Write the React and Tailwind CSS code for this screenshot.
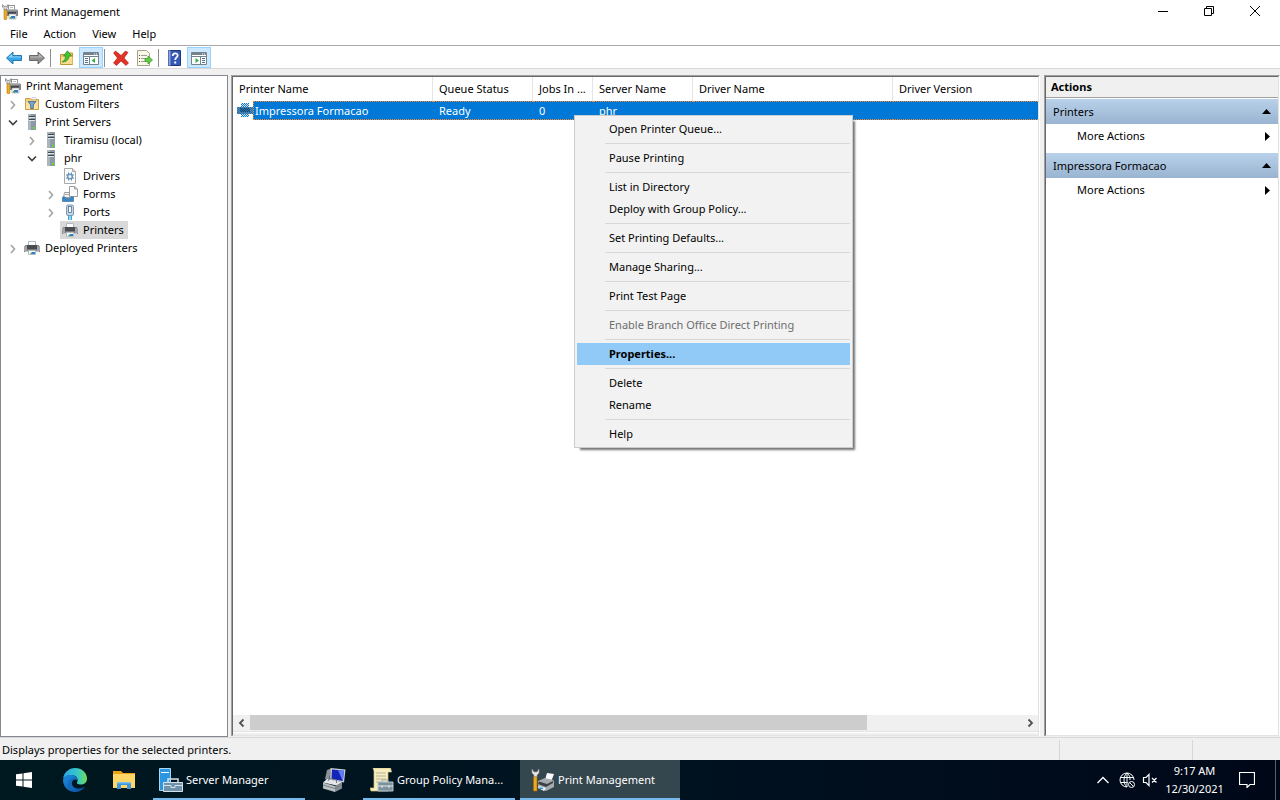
import React from "react";

function Icon({ size = 16, box = "0 0 16 16", children, className = "size-4" }) {
  return (
    <svg width={size} height={size} viewBox={box} className={`shrink-0 ${className}`} aria-hidden="true">
      {children}
    </svg>
  );
}

function PrintMgmtIcon() {
  return (
    <Icon>
      <rect x="6.5" y="1.5" width="6" height="5" fill="#fff" stroke="#8f959a" />
      <path d="M8 3.500h3" stroke="#b9bec2" />
      <path d="M5 5h10v1h1v6H5z" fill="#808285" />
      <path d="M5 5h10v1.500H5z" fill="#b5b7b9" />
      <path d="M6 8h8v3H6z" fill="#45474b" />
      <path d="M7 10h7v5H7z" fill="#f3f5f6" stroke="#9a9a9a" strokeWidth=".6" />
      <path d="M9 12h4v2.500H9z" fill="#2c7cc4" />
      <path d="M8 13h2v1.500H8z" fill="#46a24a" />
      <path d="M.6.6v2.600L2 4.600V6h2.600V4.600L6 3.200V.6L4.600 2.400H2z" fill="#d9d9d9" stroke="#7d7d7d" strokeWidth=".8" />
      <rect x="2" y="6" width="2.800" height="9.500" rx=".8" fill="#f2b01e" stroke="#a86f00" strokeWidth=".6" />
    </Icon>
  );
}

function FilterFolderIcon() {
  return (
    <Icon>
      <path d="M1.500 2.500h5l1 1h7v10h-13z" fill="#f3cf78" stroke="#c9a048" />
      <path d="M2 5.500h12v7.500H2z" fill="#fbe3a0" />
      <path d="M8 1.500h4v2H8z" fill="#fff" stroke="#b9b9b9" strokeWidth=".6" />
      <path d="M4 5.500h8L9.300 9v3.500H6.700V9z" fill="#7ba3cc" stroke="#42658c" strokeWidth=".8" />
    </Icon>
  );
}

function ServerIcon() {
  return (
    <Icon>
      <path d="M4 0h8v16H4z" fill="#8d9aa3" />
      <path d="M4 0h3v16H4z" fill="#aab6be" />
      <path d="M5 2h6v1H5zM5 5h6v1H5z" fill="#3d4850" />
      <path d="M5 3h6v1H5zM5 6h6v1H5z" fill="#dfe5e9" />
      <path d="M9 13h2v2H9z" fill="#5de01f" />
    </Icon>
  );
}

function DriverIcon() {
  return (
    <Icon>
      <path d="M2.500.5h8l3 3v12h-11z" fill="#fafafa" stroke="#a9a9a9" />
      <path d="M10.500.5v3h3" fill="#ddd" stroke="#a9a9a9" />
      <circle cx="8" cy="8.500" r="2.300" fill="none" stroke="#6b97bd" strokeWidth="1.500" />
      <path d="M6.500 4.500v2M9.500 4.500v2M6.500 10.500v2M9.500 10.500v2M4 7h2M4 10h2M10 7h2M10 10h2" stroke="#5d8db6" />
    </Icon>
  );
}

function FormsIcon() {
  return (
    <Icon>
      <path d="M2.500 6.500H8v5H1.500z" fill="#f4f4f4" stroke="#9d9d9d" />
      <path d="M3 8.500h5" stroke="#aaa" />
      <path d="M7.500.5h5l3 2.500v7.500h-8z" fill="#fafafa" stroke="#9d9d9d" />
      <path d="M12.500.5V3h3" fill="none" stroke="#9d9d9d" />
      <path d="M.5 11h2.500l1 1.500h4L9 11h2.500v4.500H.5z" fill="#3b87c4" stroke="#2b699e" strokeWidth=".6" />
    </Icon>
  );
}

function PortsIcon() {
  return (
    <Icon>
      <rect x="4.500" y="1" width="7" height="10.500" rx="1.500" fill="#c5d5e4" stroke="#7f9ab5" />
      <rect x="6.500" y="2.500" width="3" height="6" fill="#f4f8fb" stroke="#4f7396" strokeWidth=".8" />
      <path d="M6 11.500h1.500V16H6zM8.500 11.500H10V16H8.500z" fill="#39a9dc" />
    </Icon>
  );
}

function PrinterIcon() {
  return (
    <Icon>
      <path d="M4.500 1.500h7v4h-7z" fill="#fff" stroke="#aeb9c0" />
      <path d="M1 5h14v1h1v6H0V6h1z" fill="#808285" />
      <path d="M0 6h3v5H0zM13 6h3v5h-3z" fill="#a2a4a7" />
      <path d="M3 5h10v4H3z" fill="#494b50" />
      <path d="M3 9h10v1H3z" fill="#77797c" />
      <path d="M1 11h14v1H1z" fill="#c7c8ca" />
      <path d="M4.500 10.500h7v4h-7z" fill="#fff" stroke="#b1bcc3" />
      <path d="M8 12h3v2H8z" fill="#2c7fc9" />
      <path d="M6.500 12.500H8V14H6.500z" fill="#3fa05a" />
    </Icon>
  );
}

function SelectedPrinterIcon() {
  return (
    <Icon className="mt-px size-4">
      <defs>
        <pattern id="dither" width="2" height="2" patternUnits="userSpaceOnUse">
          <path d="M0 0h1v1H0zM1 1h1v1H1z" fill="#0078d7" />
        </pattern>
      </defs>
      <path d="M4 1h8v4H4zM4 11h8v4H4z" fill="#dfe4e8" />
      <path d="M0 5h16v7H0z" fill="#808285" />
      <path d="M3 6h10v4H3z" fill="#3c3e42" />
      <path d="M4 1h8v4h4v7h-4v3H4v-3H0V5h4z" fill="url(#dither)" shapeRendering="crispEdges" />
    </Icon>
  );
}

function Chevron({ open }) {
  return (
    <Icon>
      {open ? (
        <path d="M4 6.500 8 10.500 12 6.500" fill="none" stroke="#404040" strokeWidth="1.700" />
      ) : (
        <path d="M6 5 9.500 9 6 13" fill="none" stroke="#a6a6a6" strokeWidth="1.700" />
      )}
    </Icon>
  );
}

const tree = [
  { label: "Print Management", icon: PrintMgmtIcon, pad: "pl-[2px]" },
  { label: "Custom Filters", icon: FilterFolderIcon, pad: "pl-[4px]", open: false },
  { label: "Print Servers", icon: ServerIcon, pad: "pl-[4px]", open: true },
  { label: "Tiramisu (local)", icon: ServerIcon, pad: "pl-[23px]", open: false },
  { label: "phr", icon: ServerIcon, pad: "pl-[23px]", open: true },
  { label: "Drivers", icon: DriverIcon, pad: "pl-[59px]" },
  { label: "Forms", icon: FormsIcon, pad: "pl-[42px]", open: false },
  { label: "Ports", icon: PortsIcon, pad: "pl-[42px]", open: false },
  { label: "Printers", icon: PrinterIcon, pad: "pl-[59px]", selected: true },
  { label: "Deployed Printers", icon: PrinterIcon, pad: "pl-[4px]", open: false },
];

function Tree() {
  return (
    <nav aria-label="Console tree" className="w-[228px] shrink-0 border border-[#828790] bg-white py-px">
      <ul>
        {tree.map((n) => (
          <li key={n.label} className={`flex h-[18px] items-center ${n.pad}`}>
            {n.open !== undefined && (
              <button aria-label={`Toggle ${n.label}`} className="mr-px">
                <Chevron open={n.open} />
              </button>
            )}
            <button className={`flex h-[18px] items-center gap-[5px] pr-1 pl-[2px] ${n.selected ? "bg-[#d9d9d9]" : ""}`}>
              <n.icon />
              {n.label}
            </button>
          </li>
        ))}
      </ul>
    </nav>
  );
}

function Toolbar() {
  const btn = "flex h-[21px] w-6 items-center justify-center pt-px";
  const arrow = "flex h-[21px] w-[23px] items-center justify-center pt-px";
  const pressed = "flex h-[21px] w-6 items-center justify-center border border-[#99d1ff] bg-[#cce8ff] pt-px";
  return (
    <div role="toolbar" className="flex h-[23px] items-center border-b border-[#d7d7d7] bg-white pt-px pl-[2px]">
      <button aria-label="Back" className={arrow}>
        <Icon>
          <path d="M.5 8 7 2v3.500h8.500v5H7V14z" fill="#35a4e8" stroke="#1d6ca8" strokeWidth=".9" />
          <path d="M2 7.500 6.200 3.800v2.700h8.500v1z" fill="#8fd3f8" />
        </Icon>
      </button>
      <button aria-label="Forward" className={arrow}>
        <Icon>
          <path d="M15.500 8 9 2v3.500H.5v5H9V14z" fill="#8f8f8f" stroke="#5f5f5f" strokeWidth=".9" />
          <path d="M14 7.500 9.800 3.800v2.700H1.300v1z" fill="#b9b9b9" />
        </Icon>
      </button>
      <span className="mr-1 ml-[2px] h-[18px] w-px bg-[#8d8d8d]" />
      <button aria-label="Up one level" className={btn}>
        <Icon>
          <path d="M1.500 4.500h5l1-1.500h6v11.500h-12z" fill="#efc469" stroke="#c29539" />
          <path d="M2 7h11.500v7H2z" fill="#f9dc8f" />
          <path d="M3 12c2.500-1 3.500-3 3.500-6H4.500L8.500.8l4 5.200H10c0 4-3 6-7 6z" fill="#44c332" stroke="#238c1c" strokeWidth=".7" />
        </Icon>
      </button>
      <button aria-label="Show or hide console tree" aria-pressed="true" className={pressed}>
        <Icon>
          <path d="M.5 2.500h15v12H.5z" fill="#fff" stroke="#75838d" />
          <path d="M1 3h14v2H1z" fill="#75838d" />
          <path d="M1 6.500h14M6.500 7v7" stroke="#75838d" />
          <path d="M2 8.500h3M2 10.500h3M2 12.500h3" stroke="#4f6f91" />
          <path d="M12 8v5L8.500 10.500z" fill="#35b044" />
          <path d="M11 4h1M13 4h1" stroke="#fff" />
        </Icon>
      </button>
      <span className="mr-1 ml-px h-[18px] w-px bg-[#8d8d8d]" />
      <button aria-label="Delete" className={btn}>
        <Icon>
          <path d="m.5 3 2-2 5.500 4.500L12.500 1 15 2.500 11 8l4.500 5-2.500 2.500L8 11l-4.500 4.500L.5 13l4-5z" fill="#e23326" stroke="#a91912" strokeWidth=".6" />
        </Icon>
      </button>
      <button aria-label="Export list" className={btn}>
        <Icon>
          <path d="M.5.5h9l3 3v12H.5z" fill="#fbf8e8" stroke="#a9a28a" />
          <path d="M2 5.500h1M2 8.500h1M2 11.500h1" stroke="#4d4d4d" />
          <path d="M4 5.500h6M4 8.500h5M4 11.500h5" stroke="#9d9d9d" />
          <path d="M8 8.500h3V6l4.500 4-4.500 4v-2.500H8z" fill="#63cc45" stroke="#2f9424" strokeWidth=".7" />
        </Icon>
      </button>
      <span className="mr-1 ml-px h-[18px] w-px bg-[#8d8d8d]" />
      <button aria-label="Help" className={btn}>
        <Icon>
          <path d="M1.500.5h12v15h-12z" fill="#3659b5" stroke="#20377c" />
          <path d="M1.500.5h2v15h-2z" fill="#8ea5de" />
          <path d="M5.700 6c0-3.500 5-3.300 5-.5 0 2-2.500 2-2.500 4.500" fill="none" stroke="#fff" strokeWidth="1.700" />
          <path d="M7.200 11.500h2v2h-2z" fill="#fff" />
        </Icon>
      </button>
      <button aria-label="Show or hide action pane" aria-pressed="true" className={pressed}>
        <Icon>
          <path d="M.5 2.500h15v12H.5z" fill="#fff" stroke="#75838d" />
          <path d="M1 3h14v2H1z" fill="#75838d" />
          <path d="M1 6.500h14M9.500 7v7" stroke="#75838d" />
          <path d="M11 8.500h3M11 10.500h3M11 12.500h3" stroke="#4f6f91" />
          <path d="M4.500 8v5L8 10.500z" fill="#35b044" />
          <path d="M11 4h1M13 4h1" stroke="#fff" />
        </Icon>
      </button>
    </div>
  );
}

const sunkenOuter = "mb-px border-t border-l border-r border-t-[#a0a0a0] border-l-[#a0a0a0] border-r-white";
const sunkenInner =
  "min-w-0 flex-1 border border-t-[#696969] border-r-[#e3e3e3] border-b-[#e3e3e3] border-l-[#696969] bg-white";

function PrinterList() {
  const th = "overflow-hidden border-r border-[#e5e5e5] pl-[6px] text-left font-normal whitespace-nowrap";
  const td = "border-y border-dotted border-[#ff8728] bg-[#0078d7] pl-[6px] text-white";
  return (
    <main className={`flex min-w-0 flex-1 ${sunkenOuter}`}>
      <div className={`flex flex-col ${sunkenInner}`}>
        <div className="min-h-0 flex-1 overflow-hidden">
          <table className="w-full table-fixed border-separate border-spacing-0">
            <colgroup>
              <col className="w-[200px]" />
              <col className="w-[100px]" />
              <col className="w-[60px]" />
              <col className="w-[100px]" />
              <col className="w-[200px]" />
              <col />
            </colgroup>
            <thead>
              <tr className="h-6">
                <th className={th}>Printer Name</th>
                <th className={th}>Queue Status</th>
                <th className={th}>Jobs In ...</th>
                <th className={th}>Server Name</th>
                <th className={th}>Driver Name</th>
                <th className="pl-[6px] text-left font-normal">Driver Version</th>
              </tr>
            </thead>
            <tbody>
              <tr className="h-[19px]">
                <td className="p-0">
                  <div className="flex h-[19px] pl-1">
                    <SelectedPrinterIcon />
                    <span className="flex h-[19px] flex-1 items-center border-y border-l border-dotted border-[#ff8728] bg-[#0078d7] pl-px text-white">
                      Impressora Formacao
                    </span>
                  </div>
                </td>
                <td className={td}>Ready</td>
                <td className={td}>0</td>
                <td className={td}>phr</td>
                <td className={td}></td>
                <td className={td}></td>
              </tr>
            </tbody>
          </table>
        </div>
        <div className="flex h-[15px] items-stretch bg-[#f0f0f0]">
          <button aria-label="Scroll left" className="flex w-[17px] items-center justify-center">
            <Icon className="size-3" box="0 0 12 12">
              <path d="M7.500 2.500 4 6l3.500 3.500" fill="none" stroke="#505050" strokeWidth="1.800" />
            </Icon>
          </button>
          <div className="flex flex-1">
            <div className="w-[80%] bg-[#cdcdcd]" />
          </div>
          <button aria-label="Scroll right" className="flex w-[17px] items-center justify-center">
            <Icon className="size-3" box="0 0 12 12">
              <path d="M4.500 2.500 8 6 4.500 9.500" fill="none" stroke="#505050" strokeWidth="1.800" />
            </Icon>
          </button>
        </div>
        <div className="h-px bg-[#f0f0f0]" />
        <div className="h-[2px] border-t border-[#e3e3e3] bg-white" />
        <div className="h-[2px] bg-[#f0f0f0]" />
      </div>
    </main>
  );
}

function ActionGroup({ title }) {
  return (
    <section className="mb-[5px]">
      <button className="flex h-[25px] w-full items-center justify-between bg-linear-to-b from-[#b9d1ea] to-[#99b4d1] px-[7px]">
        {title}
        <Icon className="h-[5px] w-[9px]" box="0 0 9 5">
          <path d="M4.500 0 9 5H0z" />
        </Icon>
      </button>
      <button className="flex h-6 w-full items-center justify-between pr-2 pl-[31px]">
        More Actions
        <Icon className="h-[9px] w-[5px]" box="0 0 5 9">
          <path d="M0 0l5 4.500L0 9z" />
        </Icon>
      </button>
    </section>
  );
}

function Actions() {
  return (
    <aside className={`flex w-[236px] shrink-0 ${sunkenOuter}`}>
      <div className={sunkenInner}>
        <h2 className="mb-px flex h-[21px] items-center border-b border-[#a0a0a0] bg-[#f0f0f0] pl-[5px] font-bold">Actions</h2>
        <ActionGroup title="Printers" />
        <ActionGroup title="Impressora Formacao" />
      </div>
    </aside>
  );
}

const menu = [
  ["Open Printer Queue..."],
  ["Pause Printing"],
  ["List in Directory", "Deploy with Group Policy..."],
  ["Set Printing Defaults..."],
  ["Manage Sharing..."],
  ["Print Test Page"],
  ["Enable Branch Office Direct Printing"],
  ["Properties..."],
  ["Delete", "Rename"],
  ["Help"],
];

function ContextMenu() {
  return (
    <div
      role="menu"
      className="absolute top-[115px] left-[574px] w-[279px] border border-[#ccc] bg-[#f2f2f2] p-[2px] shadow-[4px_4px_2px_-2px_rgba(0,0,0,0.55)]"
    >
      {menu.map((group, i) => (
        <div key={group[0]}>
          {i > 0 && <div role="separator" className="my-[3px] ml-7 h-px bg-[#d7d7d7]" />}
          {group.map((label) => (
            <button
              key={label}
              role="menuitem"
              disabled={label.startsWith("Enable")}
              className={`flex h-[22px] w-full items-center pl-8 disabled:text-[#6d6d6d] ${
                label === "Properties..." ? "bg-[#91c9f7] font-bold" : ""
              }`}
            >
              {label}
            </button>
          ))}
        </div>
      ))}
    </div>
  );
}

function EdgeIcon() {
  return (
    <Icon className="size-6" box="0 0 24 24">
      <defs>
        <linearGradient id="edgeTop" x1="0" x2="1">
          <stop offset="0" stopColor="#2aa6e6" />
          <stop offset=".6" stopColor="#36c6c9" />
          <stop offset="1" stopColor="#6fe05a" />
        </linearGradient>
        <linearGradient id="edgeLow" x1="0" x2="1" y1="0" y2="1">
          <stop offset="0" stopColor="#1b8fe0" />
          <stop offset="1" stopColor="#0c4a9c" />
        </linearGradient>
      </defs>
      <path d="M0 11C1 4 6 0 12 0c7 0 12 5 12 10.500 0 4-3 6-6.500 6-2.500 0-4-1-3.500-2 1.500-2 .8-7-5-7.500C5 6.700 1.500 8.500 0 11z" fill="url(#edgeTop)" />
      <path d="M0 12C1 8.500 5 6.500 9 7c4 .4 6 3.500 5.500 6-1-2-4.500-2-5.500 1-1 4 3 7 7.500 6.500 2-.2 4-1 5.500-2C20 22 16.500 24 12 24 5 24 0 18.500 0 12z" fill="url(#edgeLow)" />
      <path d="M9 14c-2.500 3-.5 8.500 4 9.900C7 23 4 18 6 13.500 7 11 10 9.500 12.500 10.500 11 10.500 9.500 12 9 14z" fill="#1267bf" />
    </Icon>
  );
}

function ExplorerIcon() {
  return (
    <Icon className="h-[18px] w-[22px]" box="0 0 22 18">
      <path d="M0 0h8l2 2h12v4H0z" fill="#e8a317" />
      <path d="M0 3h22v14H0z" fill="#ffd767" />
      <path d="M4 18v-7h14v7h-4v-4H8v4z" fill="#3f97dd" />
      <path d="M4 11h14v1.500H4z" fill="#75baf0" />
    </Icon>
  );
}

function ServerManagerIcon() {
  return (
    <Icon className="size-6" box="0 0 24 24">
      <path d="M.5.500h11v22H.5z" fill="#2a97e0" stroke="#a9d6f5" />
      <path d="M2 4.500h8" stroke="#fff" />
      <path d="M9 14v-3h10v3" fill="none" stroke="#d7e1e8" strokeWidth="1.500" />
      <path d="M4.500 14.500h19v9h-19z" fill="#6f93ac" stroke="#d7e1e8" />
      <path d="M5 17.500h7v2h4v-2h7" fill="none" stroke="#d7e1e8" />
    </Icon>
  );
}

function ComputerToolsIcon() {
  return (
    <Icon className="size-6" box="0 0 24 24">
      <path d="M5 2 9 .5 7 13 3 11z" fill="#8b9297" />
      <path d="M8.500 0 23.500 1.500 22 14.500 8 12z" fill="#c9ccd2" />
      <path d="M10 1.500 22 2.800 20.800 13 9.500 11z" fill="#1424b8" />
      <path d="m16 2.200 6 .6L20.800 13z" fill="#5f7cf0" />
      <path d="M1 14.500 5 11l15 3-3 4z" fill="#e3e6e8" />
      <path d="M1 14.500 13 18v6L1 20.500z" fill="#b9c0c4" />
      <path d="m13 18 7-4v6.500L13 24z" fill="#848d92" />
      <path d="m6 13 1.500-2.500 7 1.500v3" fill="none" stroke="#70797e" />
      <path d="m1 17 12 3.500 7-4" fill="none" stroke="#6c7579" strokeWidth=".8" />
    </Icon>
  );
}

function PolicyIcon() {
  return (
    <Icon className="size-6" box="0 0 24 24">
      <path d="M3 0h17.500l1 4H18v19H1l-1-3h4V3z" fill="#f7edbe" stroke="#d1bf79" strokeWidth=".7" />
      <path d="M6 5h10M6 8h10M6 11h10M6 14h5" stroke="#b5b29d" />
      <path d="M12 14v-2h6v2" fill="none" stroke="#9fadb5" />
      <path d="M8 14h15v9H8z" fill="#7c929e" stroke="#b8c5cc" />
      <path d="M8 18h15M12 17v3M19 17v3" stroke="#dfe6ea" />
    </Icon>
  );
}

function PrintToolsIcon() {
  return (
    <Icon className="size-6" box="0 0 24 24">
      <path d="M14 12 16 5l7 1-3 8z" fill="#fafafa" />
      <path d="m7 13 7-3 8 2 1 1v6l-8 4-8-3z" fill="#a5abaf" />
      <path d="m8 13.500 8 2.500 6-3v2l-7 4-8-3z" fill="#3d4246" />
      <path d="m8 18 7 2-2 3-6-3z" fill="#f3f5f6" />
      <path d="m8.500 19 4 1-1 1.500-3.500-1z" fill="#3598db" />
      <path d="M1 1v4l2 2v2h3V7l2-2V1L6 4H3z" fill="#e6e6e6" stroke="#929292" strokeWidth=".6" />
      <path d="M2.500 9H6v14H2.500z" fill="#f3a81c" stroke="#a36a07" strokeWidth=".6" />
    </Icon>
  );
}

function Taskbar() {
  return (
    <footer className="flex h-10 shrink-0 items-stretch bg-linear-to-r from-[#001820] via-[#001220] to-[#000818] text-white">
      <button aria-label="Start" className="flex w-12 items-center justify-center">
        <Icon>
          <path d="M0 2.300 6.500 1.400V7.500H0zM7.500 1.200 16 0v7.500H7.500zM0 8.500h6.500v6.100L0 13.700zM7.500 8.500H16V16l-8.500-1.200z" fill="#fff" />
        </Icon>
      </button>
      <button aria-label="Microsoft Edge" className="flex w-[54px] items-center justify-center">
        <EdgeIcon />
      </button>
      <button aria-label="File Explorer" className="flex w-11 items-center justify-center">
        <ExplorerIcon />
      </button>
      <button className="ml-[7px] flex w-[152px] items-center gap-[3px] border-b-2 border-[#76b9ed] pt-[2px] pl-[6px]">
        <ServerManagerIcon />
        Server Manager
      </button>
      <button aria-label="Computer tools" className="flex w-[58px] items-center justify-center">
        <ComputerToolsIcon />
      </button>
      <button className="flex w-[152px] items-center gap-[3px] border-b-2 border-[#76b9ed] pt-[2px] pl-[7px]">
        <PolicyIcon />
        Group Policy Mana...
      </button>
      <button className="ml-[5px] flex w-40 items-center gap-[3px] border-b-2 border-[#76b9ed] bg-[#34464e] pt-[2px] pl-[11px]">
        <PrintToolsIcon />
        Print Management
      </button>
      <div className="ml-auto flex items-center">
        <button aria-label="Show hidden icons" className="flex w-6 justify-center">
          <Icon className="h-4 w-3" box="0 0 12 16">
            <path d="M.5 11 6 5.500 11.500 11" fill="none" stroke="#fff" strokeWidth="1.300" />
          </Icon>
        </button>
        <button aria-label="Network" className="flex w-6 justify-center">
          <Icon>
            <g fill="none" stroke="#fff">
              <path d="M15 8A7 7 0 1 0 8 15" />
              <path d="M8 1C4 4 4 12 8 15M8 1c2.500 2 3.200 4.500 3 7M1.500 5.500h13M1.500 10.500h7M8 1v14" />
              <circle cx="12.500" cy="12.500" r="3" />
              <path d="m10.500 10.500 4 4" />
            </g>
          </Icon>
        </button>
        <button aria-label="Volume muted" className="flex w-[22px] justify-center">
          <Icon>
            <path d="M1.500 5.500H4l3-3v11l-3-3H1.500z M10 6l4.500 4.500M14.500 6 10 10.500" fill="none" stroke="#fff" strokeWidth="1.200" />
          </Icon>
        </button>
        <div className="w-[67px] text-center leading-[18px] whitespace-nowrap">
          9:17 AM
          <br />
          12/30/2021
        </div>
        <button aria-label="Notifications" className="flex w-[37px] justify-center">
          <Icon>
            <path d="M.5.5h15v12H11l-3 3v-3H.5z" fill="none" stroke="#fff" strokeWidth="1.200" />
          </Icon>
        </button>
        <div className="ml-[10px] h-10 w-[5px] border-l border-[#55616b]" />
      </div>
    </footer>
  );
}

function TitleBar() {
  return (
    <header className="flex h-[23px] items-center bg-white pl-[2px]">
      <PrintMgmtIcon />
      <h1 className="ml-[5px] flex-1">Print Management</h1>
      <button aria-label="Minimize" className="flex w-[46px] justify-center pb-[2px]">
        <Icon className="size-[10px]" box="0 0 10 10">
          <path d="M0 5.500h10" stroke="#000" />
        </Icon>
      </button>
      <button aria-label="Restore" className="flex w-[46px] justify-center pb-[2px]">
        <Icon className="size-[10px]" box="0 0 10 10">
          <path d="M.5 2.500h7v7h-7zM2.500 2.500v-2h7v7h-2" fill="none" stroke="#000" />
        </Icon>
      </button>
      <button aria-label="Close" className="flex w-[46px] justify-center pb-[2px]">
        <Icon className="size-[10px]" box="0 0 10 10">
          <path d="M0 0l10 10M10 0 0 10" stroke="#000" />
        </Icon>
      </button>
      <span className="w-[2px]" />
    </header>
  );
}

export default function App() {
  return (
    <div className="relative flex h-screen flex-col overflow-hidden bg-[#f0f0f0] font-['Noto_Sans',sans-serif] text-[11px] leading-4 text-black">
      <TitleBar />
      <div role="menubar" className="flex h-[23px] items-center border-b border-[#a9a9ad] bg-white pl-[2px]">
        <button role="menuitem" className="px-2">File</button>
        <button role="menuitem" className="px-2">Action</button>
        <button role="menuitem" className="px-2">View</button>
        <button role="menuitem" className="px-2">Help</button>
      </div>
      <Toolbar />
      <div className="flex min-h-0 flex-1 pt-[6px]">
        <Tree />
        <div className="w-[3px]" />
        <PrinterList />
        <div className="w-1" />
        <Actions />
      </div>
      <div role="status" className="flex h-[23px] shrink-0 items-stretch border-t border-[#d7d7d7] pt-[2px]">
        <span className="flex flex-1 items-center border-r border-[#d7d7d7] pl-[2px]">Displays properties for the selected printers.</span>
        <span className="w-[133px] border-r border-[#d7d7d7]" />
        <span className="w-[87px]" />
      </div>
      <Taskbar />
      <ContextMenu />
    </div>
  );
}
